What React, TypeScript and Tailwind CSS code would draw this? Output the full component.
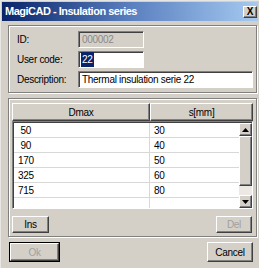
import React from 'react';

const rows: [string, string][] = [
  [' 50', '30'],
  [' 90', '40'],
  ['170', '50'],
  ['325', '60'],
  ['715', '80'],
  ['', ''],
];

const raised =
  'border border-t-white border-l-white border-r-[#404040] border-b-[#404040] shadow-[inset_-1px_-1px_0_#808080]';
const sunken =
  'border border-t-[#808080] border-l-[#808080] border-r-white border-b-white shadow-[inset_1px_1px_0_#404040]';
const etched =
  'border border-[#808080] shadow-[inset_1px_1px_0_#fff,1px_1px_0_#fff]';

const Arrow: React.FC<{ up?: boolean }> = ({ up }) => (
  <svg width="7" height="4" viewBox="0 0 7 4">
    <path d={up ? 'M3.5 0 L7 4 L0 4 Z' : 'M0 0 L7 0 L3.5 4 Z'} fill="#000" />
  </svg>
);

const App: React.FC = () => {
  return (
    <div
      className="w-[259px] h-[268px] bg-[#d4d0c8] flex flex-col text-[10px] tracking-[-0.3px] text-black overflow-hidden border-l border-t border-l-[#e8e6e2] border-t-[#e8e6e2]"
      style={{ fontFamily: '"Liberation Sans", Arial, sans-serif' }}
    >
      {/* title bar */}
      <div className="mx-[1px] mt-[1px] h-[19px] flex items-center justify-between bg-gradient-to-r from-[#0a246a] via-[#5a7fbf] to-[#a6caf0] pl-[3px] pr-[1px]">
        <span className="text-white font-bold text-[11px] tracking-[-0.5px]">MagiCAD - Insulation series</span>
        <div className={`w-[14px] h-[12px] bg-[#d4d0c8] flex items-center justify-center text-[10px] font-bold leading-none tracking-normal ${raised}`}>
          X
        </div>
      </div>

      <div className="flex flex-col px-[7px] pr-[2px]">
        {/* top group */}
        <div className={`mt-[4px] h-[68px] pt-[5px] pl-[8px] pr-[3px] flex flex-col gap-[3px] ${etched}`}>
          <div className="flex items-center h-[17px]">
            <span className="w-[61px]">ID:</span>
            <div className={`w-[66px] h-[17px] bg-[#d4d0c8] text-[#8a8a8a] pl-[3px] flex items-center ${sunken}`}>000002</div>
          </div>
          <div className="flex items-center h-[17px]">
            <span className="w-[61px]">User code:</span>
            <div className={`w-[66px] h-[17px] bg-white pl-[2px] flex items-center ${sunken}`}>
              <span className="bg-[#0a246a] text-white px-[1px]">22</span>
            </div>
          </div>
          <div className="flex items-center h-[17px]">
            <span className="w-[61px]">Description:</span>
            <div className={`flex-1 h-[17px] bg-white pl-[3px] flex items-center ${sunken}`}>Thermal insulation serie 22</div>
          </div>
        </div>

        {/* table group */}
        <div className={`mt-[5px] h-[139px] pt-[4px] px-[3px] flex flex-col ${etched}`}>
          <div className="flex h-[18px]">
            <div className={`w-[138px] flex items-center justify-center bg-[#d4d0c8] ${raised}`}>Dmax</div>
            <div className={`flex-1 flex items-center justify-center bg-[#d4d0c8] ${raised}`}>s[mm]</div>
          </div>
          <div className={`h-[88px] bg-white flex ${sunken} pt-[1px] pl-[1px]`}>
            <div className="flex-1 flex flex-col overflow-hidden">
              {rows.map(([d, s], i) => (
                <div key={i} className="flex h-[15px] shrink-0 border-b border-[#d8d8d8]">
                  <div className="w-[136px] pl-[4px] border-r border-[#d8d8d8] flex items-center whitespace-pre">{d}</div>
                  <div className="flex-1 pl-[4px] flex items-center">{s}</div>
                </div>
              ))}
            </div>
            <div className="w-[13px] flex flex-col bg-[#ece9e4]">
              <div className={`h-[13px] bg-[#d4d0c8] flex items-center justify-center ${raised}`}>
                <Arrow up />
              </div>
              <div className={`h-[50px] bg-[#d4d0c8] ${raised}`} />
              <div className="flex-1" />
              <div className={`h-[13px] bg-[#d4d0c8] flex items-center justify-center ${raised}`}>
                <Arrow />
              </div>
            </div>
          </div>
          <div className="flex justify-between mt-[7px] pr-[1px]">
            <button className={`w-[37px] h-[17px] bg-[#d4d0c8] flex items-center justify-center ${raised}`}>Ins</button>
            <button className={`w-[36px] h-[17px] bg-[#d4d0c8] text-[#a0a0a0] flex items-center justify-center ${raised}`}>Del</button>
          </div>
        </div>

        {/* dialog buttons */}
        <div className="flex justify-between mt-[5px] pl-[1px] pr-[4px]">
          <div className="w-[51px] h-[20px] border border-black">
            <button className={`w-full h-full bg-[#d4d0c8] text-[#a0a0a0] flex items-center justify-center ${raised}`}>Ok</button>
          </div>
          <button className={`w-[46px] h-[20px] bg-[#d4d0c8] flex items-center justify-center ${raised}`}>Cancel</button>
        </div>
      </div>
    </div>
  );
};

export default App;
